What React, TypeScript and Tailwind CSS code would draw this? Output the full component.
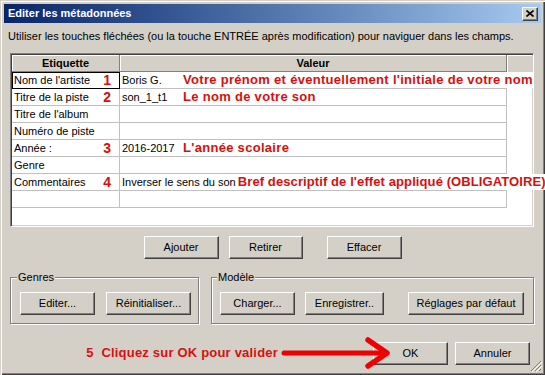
import React from 'react';

type Row = {
  label: string;
  num?: string;
  value?: string;
  note?: string;
  focus?: boolean;
  inline?: boolean;
};

const rows: Row[] = [
  { label: "Nom de l'artiste", num: '1', value: 'Boris G.', note: "Votre prénom et éventuellement l'initiale de votre nom", focus: true },
  { label: 'Titre de la piste', num: '2', value: 'son_1_t1', note: 'Le nom de votre son' },
  { label: "Titre de l'album" },
  { label: 'Numéro de piste' },
  { label: 'Année :', num: '3', value: '2016-2017', note: "L'année scolaire" },
  { label: 'Genre' },
  { label: 'Commentaires', num: '4', value: 'Inverser le sens du son', note: "Bref descriptif de l'effet appliqué (OBLIGATOIRE)", inline: true },
  { label: '' },
];

function Btn({ className, children }: { className: string; children: React.ReactNode }) {
  return (
    <div
      className={`flex h-[23px] shrink-0 items-center justify-center border border-t-white border-l-white border-r-[#404040] border-b-[#404040] bg-[#d4d0c8] text-[11px] text-black shadow-[inset_-1px_-1px_0_#808080] ${className}`}
    >
      {children}
    </div>
  );
}

function Group({ title, className, children }: { title: string; className: string; children: React.ReactNode }) {
  return (
    <div
      className={`relative h-[47px] border border-[#808080] pt-[14px] shadow-[1px_1px_0_#ffffff,inset_1px_1px_0_#ffffff] ${className}`}
    >
      <span className="absolute top-[-7px] bg-[#d4d0c8] px-[1px] text-[11px] leading-[13px]">{title}</span>
      <div className="flex">{children}</div>
    </div>
  );
}

export default function App() {
  return (
    <div className="relative flex h-[375px] w-[545px] flex-col overflow-hidden bg-[#d4d0c8] font-['Liberation_Sans',Arial,sans-serif] text-black shadow-[inset_1px_1px_0_#d4d0c8,inset_2px_2px_0_#ffffff,inset_-1px_-1px_0_#404040,inset_-2px_-2px_0_#808080]">
      {/* title bar */}
      <div className="mx-[4px] mt-[4px] flex h-[19px] items-center justify-between bg-gradient-to-r from-[#0a246a] to-[#a6caf0] pl-[4px] pr-[3px]">
        <span className="text-[11px] font-bold text-white">Editer les métadonnées</span>
        <div className="flex h-[14px] w-[16px] items-center justify-center border border-t-white border-l-white border-r-[#404040] border-b-[#404040] bg-[#d4d0c8] shadow-[inset_-1px_-1px_0_#808080]">
          <svg width="8" height="7" viewBox="0 0 8 7">
            <path d="M0.5 0.5 L7.5 6.5 M7.5 0.5 L0.5 6.5" stroke="#000" strokeWidth="1.6" />
          </svg>
        </div>
      </div>

      <div className="mt-[7px] pl-[8px] text-[11px] leading-[13px]">
        Utiliser les touches fléchées (ou la touche ENTRÉE après modification) pour naviguer dans les champs.
      </div>

      {/* table */}
      <div className="ml-[10px] mt-[10px] h-[174px] w-[524px] border border-t-[#808080] border-l-[#808080] border-r-white border-b-white bg-white p-[1px] shadow-[inset_1px_1px_0_#404040,inset_-1px_-1px_0_#d4d0c8]">
        <div className="flex h-[17px] bg-[#d4d0c8] text-[11px]">
          <div className="flex w-[108px] items-center justify-center border-b border-r border-[#808080] font-bold shadow-[inset_1px_1px_0_#ffffff]">
            Etiquette
          </div>
          <div className="flex w-[387px] items-center justify-center border-b border-r border-[#808080] font-bold shadow-[inset_1px_1px_0_#ffffff]">
            Valeur
          </div>
          <div className="flex-1 shadow-[inset_1px_1px_0_#ffffff]" />
        </div>
        {rows.map((r, i) => (
          <div key={i} className="flex h-[17px] text-[11px]">
            <div
              className={`flex w-[108px] shrink-0 items-center justify-between border-b border-r border-[#c0c0c0] pl-[2px] pr-[8px] ${
                r.focus ? 'outline outline-1 -outline-offset-1 outline-black' : ''
              }`}
            >
              <span>{r.label}</span>
              {r.num && <span className="text-[14px] font-bold leading-none text-[#d41010]">{r.num}</span>}
            </div>
            <div className="flex w-[387px] shrink-0 items-center border-b border-r border-[#c0c0c0] pl-[2px]">
              {r.value && (
                <span className={r.inline ? 'shrink-0 whitespace-nowrap' : 'w-[61px] shrink-0 whitespace-nowrap'}>{r.value}</span>
              )}
              {r.note && (
                <span
                  className={`relative shrink-0 whitespace-nowrap bg-white text-[13px] font-bold leading-[16px] text-[#d41010] ${
                    r.inline ? 'ml-[2px] tracking-[0.1px]' : 'tracking-[0.3px]'
                  }`}
                >
                  {r.note}
                </span>
              )}
            </div>
          </div>
        ))}
      </div>

      {/* buttons */}
      <div className="mt-[9px] flex justify-center">
        <Btn className="w-[75px]">Ajouter</Btn>
        <Btn className="ml-[10px] w-[74px]">Retirer</Btn>
        <Btn className="ml-[24px] w-[75px]">Effacer</Btn>
      </div>

      {/* groups */}
      <div className="mt-[18px] flex pl-[10px]">
        <Group title="Genres" className="w-[189px] pl-[9px] [&>span]:left-[6px]">
          <Btn className="w-[75px]">Editer...</Btn>
          <Btn className="ml-[11px] w-[85px]">Réinitialiser...</Btn>
        </Group>
        <Group title="Modèle" className="ml-[12px] w-[323px] pl-[8px] [&>span]:left-[5px]">
          <Btn className="w-[75px]">Charger...</Btn>
          <Btn className="ml-[10px] w-[79px]">Enregistrer..</Btn>
          <Btn className="ml-[24px] w-[116px]">Réglages par défaut</Btn>
        </Group>
      </div>

      {/* bottom row */}
      <div className="mt-[13px] flex items-center justify-end pr-[15px]">
        <span className="mr-[3px] whitespace-nowrap text-[13px] font-bold tracking-[0.2px] text-[#d41010]">
          5&nbsp;&nbsp;Cliquez sur OK pour valider
        </span>
        <svg width="110" height="32" viewBox="0 0 110 32" className="relative z-10 -mr-[18px] shrink-0">
          <path d="M3 16 L104 16" stroke="#f00000" strokeWidth="5" strokeLinecap="round" />
          <path d="M87 3 L106 16 L87 29" fill="none" stroke="#f00000" strokeWidth="5.5" strokeLinecap="round" strokeLinejoin="round" />
        </svg>
        <Btn className="w-[75px]">OK</Btn>
        <Btn className="ml-[7px] w-[75px]">Annuler</Btn>
      </div>

      {/* size grip */}
      <svg width="12" height="12" viewBox="0 0 12 12" className="absolute bottom-[3px] right-[3px]">
        <path d="M11 1 L1 11 M11 5 L5 11 M11 9 L9 11" stroke="#808080" strokeWidth="1" />
        <path d="M12 2 L2 12 M12 6 L6 12" stroke="#ffffff" strokeWidth="1" />
      </svg>
    </div>
  );
}
